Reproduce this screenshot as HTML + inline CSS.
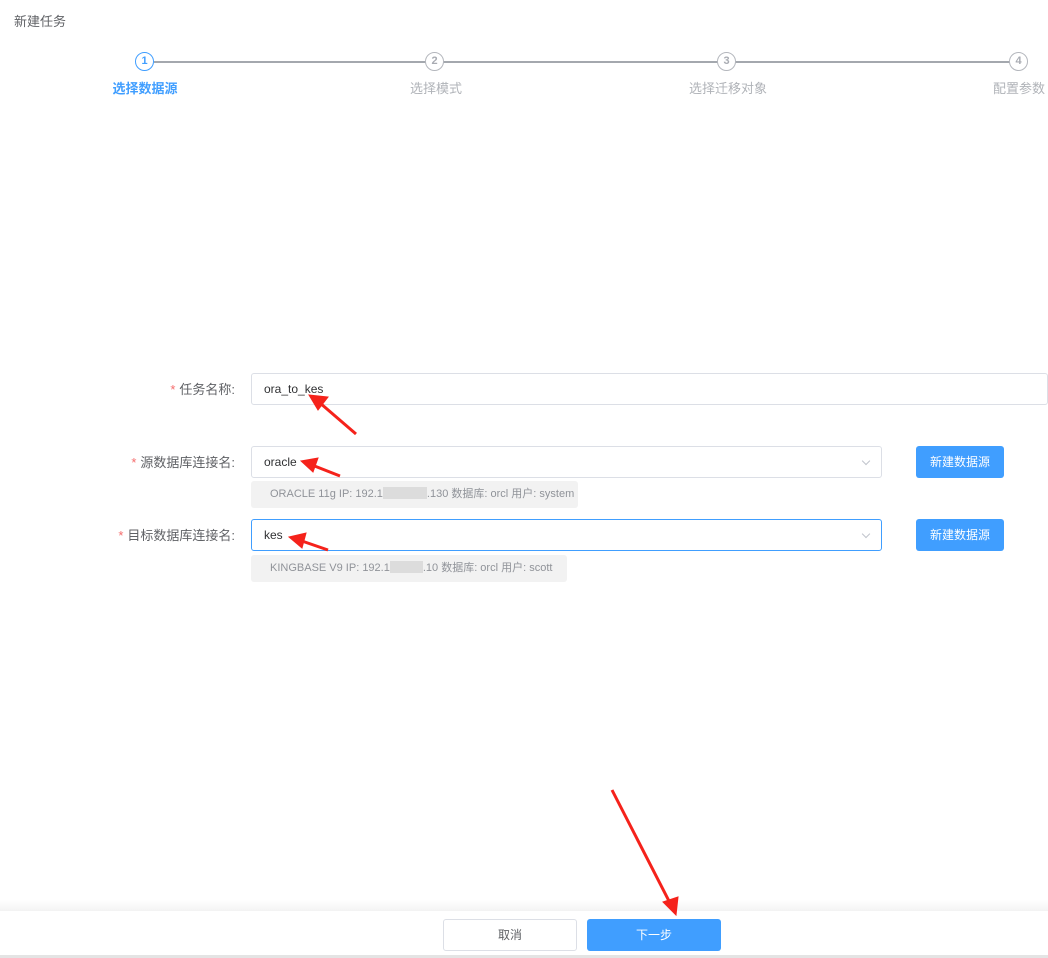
<!DOCTYPE html>
<html><head><meta charset="utf-8"><style>
*{box-sizing:border-box;margin:0;padding:0}
body{width:1048px;height:958px;position:relative;background:#fff;font-family:"Liberation Sans","Noto Sans CJK SC",sans-serif;overflow:hidden;color:#606266}
.abs{position:absolute}
.title{left:14px;top:11px;font-size:13px;color:#606266}
.line{top:61px;height:2px;background:#a4a8ae}
.circ{width:19px;height:19px;border-radius:50%;border:1.5px solid #b4b7bd;background:#fff;top:52px;font-size:11px;font-weight:bold;color:#a8abb2;text-align:center;line-height:16px}
.circ.a{border-color:#409eff;color:#409eff}
.sl{top:78px;font-size:13px;color:#b0b3b8;width:120px;text-align:center}
.sl.a{color:#409eff;font-weight:bold}
.lab{font-size:13px;color:#606266;text-align:right;width:235px;left:0}
.lab b{color:#f56c6c;font-weight:normal;margin-right:4px}
.inp{border:1px solid #dcdfe6;border-radius:3px;font-size:12px;color:#303133;padding-left:12px;line-height:30px}
.info{background:#f2f2f2;border-radius:3px;font-size:11px;color:#909399;padding-left:19px;line-height:27px}
.btn{background:#409eff;color:#fff;border-radius:3px;font-size:12px;text-align:center;line-height:32px}
.chev{position:absolute;right:12px;top:11px;width:6px;height:6px;border-right:1px solid #c0c4cc;border-bottom:1px solid #c0c4cc;transform:rotate(45deg)}
</style></head><body>
<div class="abs title">新建任务</div>
<div class="abs line" style="left:154px;width:858px"></div>
<div class="abs circ a" style="left:135px">1</div>
<div class="abs circ" style="left:425px">2</div>
<div class="abs circ" style="left:717px">3</div>
<div class="abs circ" style="left:1009px">4</div>
<div class="abs sl a" style="left:85px">选择数据源</div>
<div class="abs sl" style="left:376px">选择模式</div>
<div class="abs sl" style="left:668px">选择迁移对象</div>
<div class="abs sl" style="left:959px">配置参数</div>

<div class="abs lab" style="top:379px"><b>*</b>任务名称:</div>
<div class="abs inp" style="left:251px;top:373px;width:797px;height:32px">ora_to_kes</div>

<div class="abs lab" style="top:452px"><b>*</b>源数据库连接名:</div>
<div class="abs inp" style="left:251px;top:446px;width:631px;height:32px">oracle<span class="chev"></span></div>
<div class="abs btn" style="left:916px;top:446px;width:88px;height:32px">新建数据源</div>
<div class="abs info" style="left:251px;top:481px;width:327px;height:27px">ORACLE 11g IP: 192.1<span style="display:inline-block;width:44px;height:12px;background:#dcdcdc;vertical-align:-2px"></span>.130 数据库:&nbsp;orcl 用户: system</div>

<div class="abs lab" style="top:525px"><b>*</b>目标数据库连接名:</div>
<div class="abs inp" style="left:251px;top:519px;width:631px;height:32px;border-color:#409eff">kes<span class="chev"></span></div>
<div class="abs btn" style="left:916px;top:519px;width:88px;height:32px">新建数据源</div>
<div class="abs info" style="left:251px;top:555px;width:316px;height:27px">KINGBASE V9 IP: 192.1<span style="display:inline-block;width:33px;height:12px;background:#dcdcdc;vertical-align:-2px"></span>.10 数据库:&nbsp;orcl 用户: scott</div>

<div class="abs" style="left:0;top:900px;width:1048px;height:11px;background:linear-gradient(#fff,#f3f3f3)"></div>
<div class="abs" style="left:0;top:955px;width:1048px;height:3px;background:#e4e4e4"></div>
<div class="abs" style="left:443px;top:919px;width:134px;height:32px;border:1px solid #dcdfe6;border-radius:3px;font-size:12px;color:#606266;text-align:center;line-height:30px">取消</div>
<div class="abs btn" style="left:587px;top:919px;width:134px;height:32px">下一步</div>

<svg class="abs" style="left:0;top:0" width="1048" height="958">
<g fill="#f5221b" stroke="#f5221b" stroke-width="3">
<line x1="356" y1="434" x2="320" y2="403"/><polygon points="309,395 328,397 318,410" stroke-width="1"/>
<line x1="340" y1="476" x2="312" y2="465"/><polygon points="301,461 318,458 313,472" stroke-width="1"/>
<line x1="328" y1="550" x2="299" y2="540"/><polygon points="289,537 306,533 302,548" stroke-width="1"/>
<line x1="612" y1="790" x2="670" y2="903"/><polygon points="676,915 663,902 678,897" stroke-width="1"/>
</g></svg>
</body></html>
